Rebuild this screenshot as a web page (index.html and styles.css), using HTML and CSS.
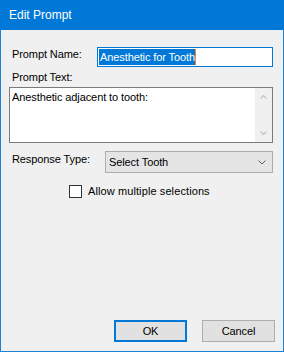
FILE: index.html
```html
<!DOCTYPE html>
<html lang="en">
<head>
    <meta charset="UTF-8">
    <meta name="viewport" content="width=device-width, initial-scale=1.0">
    <title>Edit Prompt</title>
    <link rel="stylesheet" href="styles.css">
</head>
<body>
    <div class="window">
        <div class="titlebar">Edit Prompt</div>

        <div class="content">
            <!-- Prompt name -->
            <div class="row">
                <label class="row-label name-label">Prompt Name:</label>
                <div class="textbox focused">
                    <span class="selected">Anesthetic for Tooth</span><span class="caret"></span>
                </div>
            </div>

            <!-- Prompt text -->
            <label class="block-label">Prompt Text:</label>
            <div class="memo">
                <div class="memo-text">Anesthetic adjacent to tooth:</div>
                <div class="vscroll">
                    <svg width="7" height="4" viewBox="0 0 7 4"><path d="M0.5 3.5 L3.5 0.5 L6.5 3.5" fill="none" stroke="#c2c2c2" stroke-width="1.2"/></svg>
                    <svg width="7" height="4" viewBox="0 0 7 4"><path d="M0.5 0.5 L3.5 3.5 L6.5 0.5" fill="none" stroke="#c2c2c2" stroke-width="1.2"/></svg>
                </div>
            </div>

            <!-- Response type -->
            <div class="row type-row">
                <label class="row-label type-label">Response Type:</label>
                <div class="combo">
                    <span>Select Tooth</span>
                    <svg width="8" height="5" viewBox="0 0 8 5"><path d="M0.5 0.5 L4 4 L7.5 0.5" fill="none" stroke="#5a5a5a" stroke-width="1"/></svg>
                </div>
            </div>

            <label class="check">
                <span class="check-box"></span>
                Allow multiple selections
            </label>

            <div class="buttons">
                <button class="btn btn-default">OK</button>
                <button class="btn">Cancel</button>
            </div>
        </div>
    </div>
</body>
</html>
```

FILE: styles.css
```css
body {
    margin: 0;
    padding: 0;
    font-family: "Liberation Sans", Arial, sans-serif;
    font-size: 11px;
    letter-spacing: -0.1px;
    line-height: 15px;
    color: #000;
}

.window {
    width: 284px;
    height: 352px;
    box-sizing: border-box;
    border: 1px solid #1883d7;
    border-top: none;
    background-color: #f0f0f0;
    display: flex;
    flex-direction: column;
}

.titlebar {
    height: 30px;
    margin: 0 -1px;
    padding-left: 9px;
    display: flex;
    align-items: center;
    background-color: #0078d7;
    color: #fff;
    font-size: 12px;
    letter-spacing: 0;
}

.content {
    flex: 1;
    display: flex;
    flex-direction: column;
    padding: 17px 10px 9px 8px;
}

.row {
    display: flex;
    align-items: flex-start;
}

.row-label {
    padding-left: 3px;
}

.name-label {
    width: 85px;
}

.type-label {
    width: 93px;
}

.textbox {
    flex: 1;
    height: 20px;
    box-sizing: border-box;
    border: 1px solid #7a7a7a;
    background-color: #fff;
    padding: 1px 0 0 1px;
    display: flex;
    align-items: flex-start;
}

.textbox.focused {
    border-color: #0078d7;
}

.selected {
    background-color: #0078d7;
    color: #fff;
    padding-left: 1px;
    height: 16px;
    line-height: 16px;
}

.caret {
    width: 1px;
    height: 16px;
    background-color: #f7821f;
}

.block-label {
    margin-top: 3px;
    padding-left: 3px;
}

.memo {
    margin-top: 2px;
    height: 56px;
    box-sizing: border-box;
    border: 1px solid #7a7a7a;
    background-color: #fff;
    display: flex;
}

.memo-text {
    flex: 1;
    padding: 2px 0 0 2px;
}

.vscroll {
    width: 17px;
    background-color: #f0f0f0;
    display: flex;
    flex-direction: column;
    align-items: center;
    justify-content: space-between;
    padding: 7px 0 7px;
}

.type-row {
    margin-top: 8px;
}

.type-label {
    padding-top: 1px;
}

.combo {
    flex: 1;
    height: 22px;
    box-sizing: border-box;
    border: 1px solid #adadad;
    background-color: #e5e5e5;
    padding: 0 6px 0 3px;
    display: flex;
    align-items: center;
    justify-content: space-between;
}

.check {
    margin-top: 11px;
    margin-left: 60px;
    display: flex;
    align-items: center;
    gap: 6px;
    letter-spacing: 0.1px;
}

.check-box {
    width: 13px;
    height: 13px;
    box-sizing: border-box;
    border: 1px solid #333;
    background-color: #fff;
}

.buttons {
    margin-top: auto;
    margin-right: -2px;
    display: flex;
    justify-content: flex-end;
    gap: 15px;
}

.btn {
    width: 73px;
    height: 22px;
    box-sizing: border-box;
    border: 1px solid #adadad;
    background-color: #e1e1e1;
    font-family: "Liberation Sans", Arial, sans-serif;
    font-size: 11px;
    letter-spacing: -0.1px;
    color: #000;
    padding: 0;
}

.btn-default {
    border: 2px solid #0078d7;
}
```
